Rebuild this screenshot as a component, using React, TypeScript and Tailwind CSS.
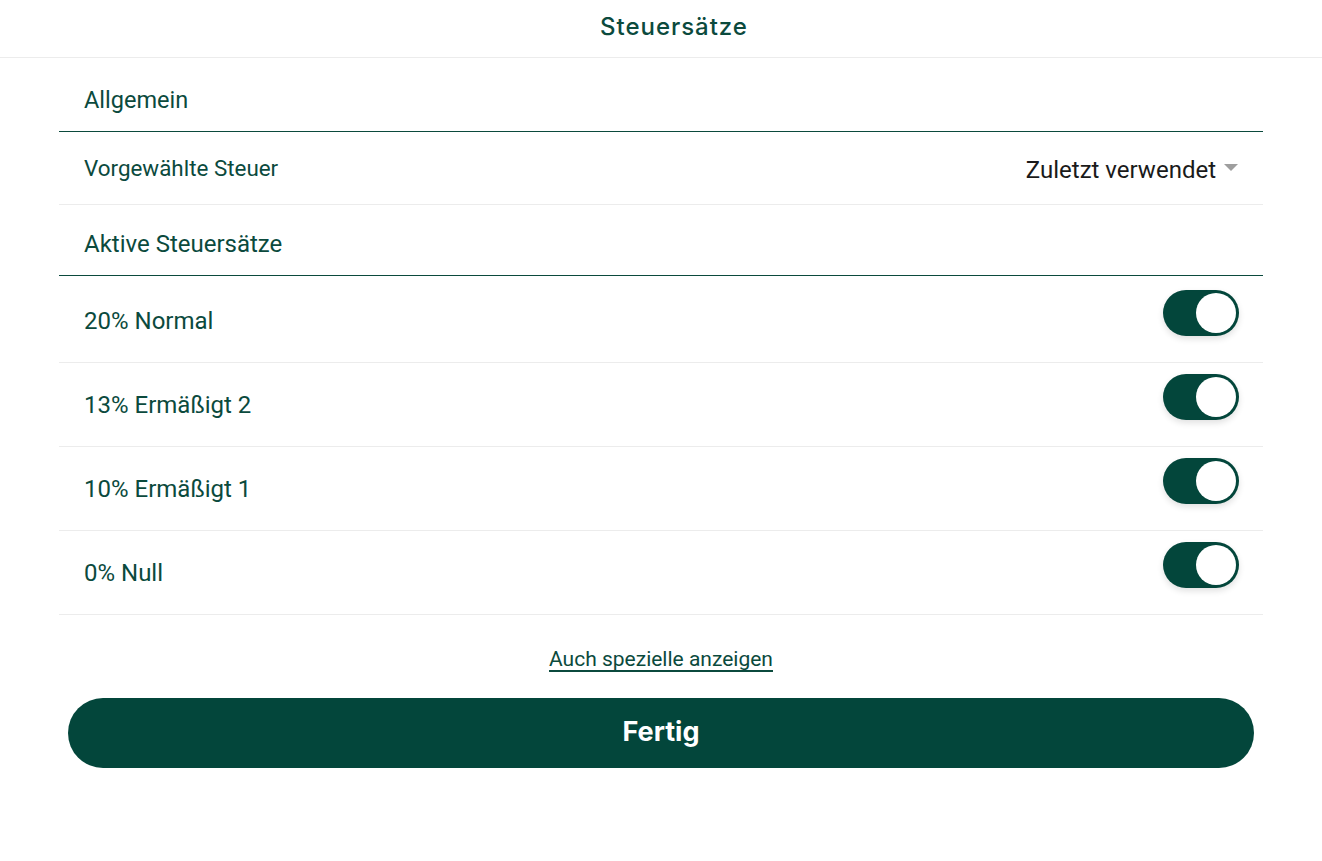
import { useState } from "react";

type Rate = { id: string; label: string };

const rates: Rate[] = [
  { id: "20", label: "20% Normal" },
  { id: "13", label: "13% Ermäßigt 2" },
  { id: "10", label: "10% Ermäßigt 1" },
  { id: "0", label: "0% Null" },
];

function Toggle({ on, onChange }: { on: boolean; onChange: () => void }) {
  return (
    <button
      type="button"
      onClick={onChange}
      className={
        on
          ? "relative h-[46px] w-[76px] rounded-full bg-[#03463b] shadow-[0_3px_6px_rgba(0,0,0,0.12)]"
          : "relative h-[46px] w-[76px] rounded-full bg-[#d4d4d4] shadow-[0_3px_6px_rgba(0,0,0,0.12)]"
      }
    >
      <span
        className={
          on
            ? "absolute right-[3px] top-[3px] h-[40px] w-[40px] rounded-full bg-white"
            : "absolute left-[3px] top-[3px] h-[40px] w-[40px] rounded-full bg-white"
        }
      />
    </button>
  );
}

export default function App() {
  const [active, setActive] = useState<Record<string, boolean>>({ "20": true, "13": true, "10": true, "0": true });

  return (
    <div className="min-h-screen bg-white font-['Roboto',sans-serif] text-[#0b4a3d]">
      <header className="flex h-[58px] items-center justify-center border-b border-[#ececec]">
        <h1 className="ml-[26px] pb-[4px] font-['Inter',sans-serif] text-[24px] font-medium tracking-[0.04em] text-[#0b4a3d]">
          Steuersätze
        </h1>
      </header>

      <div className="mx-[59px]">
        <div className="flex h-[74px] items-center border-b border-[#0b4a3d] px-[25px] pt-[12px] text-[23.5px]">
          Allgemein
        </div>

        <div className="flex h-[73px] items-center justify-between border-b border-[#ececec] px-[25px] pt-[2px] text-[22.4px]">
          <span>Vorgewählte Steuer</span>
          <button type="button" className="flex items-center gap-[8px] pt-[2px] text-[24px] text-[#1a1a1a]">
            Zuletzt verwendet
            <svg width="14" height="8" viewBox="0 0 14 8" className="mb-[4px]">
              <path d="M0 0h14L7 7z" fill="#9e9e9e" />
            </svg>
          </button>
        </div>

        <div className="flex h-[71px] items-center border-b border-[#0b4a3d] px-[25px] pt-[8px] text-[24px]">
          Aktive Steuersätze
        </div>

        <div className="pt-[3px]">
          {rates.map((r) => (
            <div
              key={r.id}
              className="flex h-[84px] items-center justify-between border-b border-[#ececec] pl-[25px] pr-[24px] text-[24px]"
            >
              <span>{r.label}</span>
              <div className="pb-[6px]">
                <Toggle on={active[r.id]} onChange={() => setActive({ ...active, [r.id]: !active[r.id] })} />
              </div>
            </div>
          ))}
        </div>

        <div className="flex justify-center pt-[29px]">
          <a href="#" className="text-[21px] text-[#0b4a3d] underline underline-offset-[4px]">
            Auch spezielle anzeigen
          </a>
        </div>

        <div className="px-[9px] pt-[22px]">
          <button
            type="button"
            className="flex h-[70px] w-full items-center justify-center rounded-full bg-[#03463b] font-['Inter',sans-serif] text-[27px] font-bold text-white"
          >
            Fertig
          </button>
        </div>
      </div>
    </div>
  );
}
